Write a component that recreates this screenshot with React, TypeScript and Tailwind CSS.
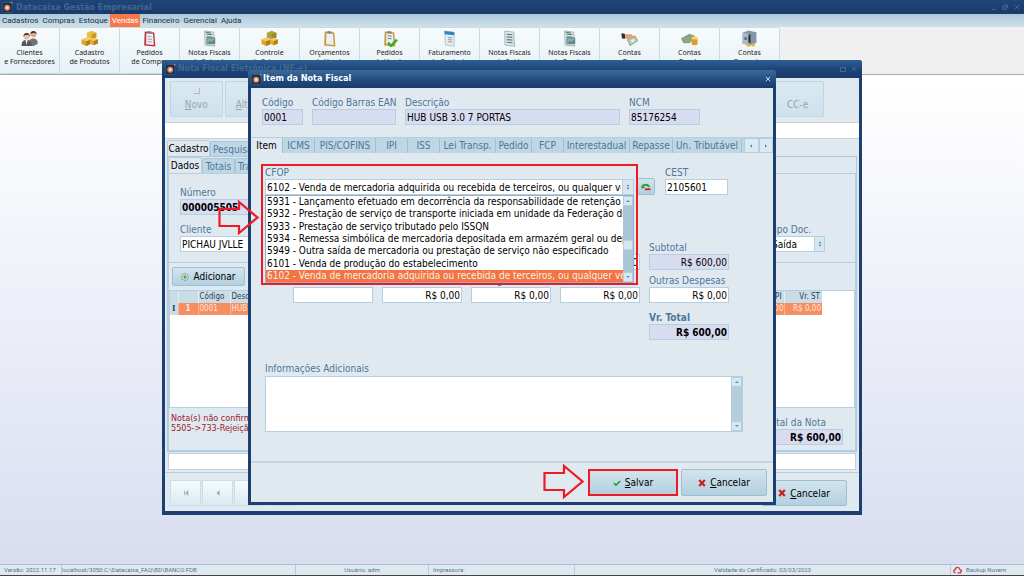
import React, { useState } from 'react'

const menus = ['Cadastros', 'Compras', 'Estoque', 'Vendas', 'Financeiro', 'Gerencial', 'Ajuda']

const shortcuts = [
  { icon: 'people', lines: ['Clientes', 'e Fornecedores'] },
  { icon: 'boxes', lines: ['Cadastro', 'de Produtos'] },
  { icon: 'clipRed', lines: ['Pedidos', 'de Compra'] },
  { icon: 'invoiceIn', lines: ['Notas Fiscais', 'de Entrada'] },
  { icon: 'boxesGreen', lines: ['Controle', 'de Estoque'] },
  { icon: 'clip', lines: ['Orçamentos', 'de Venda'] },
  { icon: 'clipCheck', lines: ['Pedidos', 'de Venda'] },
  { icon: 'contract', lines: ['Faturamento', 'de Contrato'] },
  { icon: 'invoice', lines: ['Notas Fiscais', 'de Saída'] },
  { icon: 'invoiceIn', lines: ['Notas Fiscais', 'de Serviço'] },
  { icon: 'hand', lines: ['Contas', 'a Pagar'] },
  { icon: 'coins', lines: ['Contas', 'a Receber'] },
  { icon: 'safe', lines: ['Contas', 'Correntes'] }
]

const noteActions = [
  'Novo', 'Alterar', 'Excluir', 'Imprimir', 'Enviar', 'Consultar',
  'Duplicar', 'Inutilizar', 'E-mail', 'XML', 'DANFE', 'CC-e'
]

const itemTabs = [
  { name: 'Item', width: 'w-8' },
  { name: 'ICMS', width: 'w-8' },
  { name: 'PIS/COFINS', width: 'w-[61px]' },
  { name: 'IPI', width: 'w-8' },
  { name: 'ISS', width: 'w-8' },
  { name: 'Lei Transp.', width: 'w-14' },
  { name: 'Pedido', width: 'w-9' },
  { name: 'FCP', width: 'w-8' },
  { name: 'Interestadual', width: 'w-[66px]' },
  { name: 'Repasse', width: 'w-[43px]' },
  { name: 'Un. Tributável', width: 'w-[69px]' }
]

const cfops = [
  '5931 - Lançamento efetuado em decorrência da responsabilidade de retenção do',
  '5932 - Prestação de serviço de transporte iniciada em unidade da Federação diversa',
  '5933 - Prestação de serviço tributado pelo ISSQN',
  '5934 - Remessa simbólica de mercadoria depositada em armazém geral ou depósito',
  '5949 - Outra saída de mercadoria ou prestação de serviço não especificado',
  '6101 - Venda de produção do estabelecimento',
  '6102 - Venda de mercadoria adquirida ou recebida de terceiros, ou qualquer venda'
]

function AppLogo() {
  return (
    <svg className="h-3 w-3 shrink-0" viewBox="0 0 12 12">
      <rect x="0.5" y="1.5" width="9.5" height="10" rx="1" fill="#16304f" stroke="#3c6a8e" strokeWidth="0.6" />
      <circle cx="5.2" cy="6.7" r="2.2" fill="#fbe3d4" stroke="#f0814b" strokeWidth="1.5" />
      <circle cx="9.6" cy="1.6" r="0.9" fill="#f0814b" />
    </svg>
  )
}

function ClipboardArt({ frame, paper }: { frame: string; paper: string }) {
  return (
    <g>
      <path d="M3.5 1.5 L12.5 2.3 L13.5 15.5 L3 14.6 Z" fill={frame} />
      <path d="M5 3 L11.3 3.5 L12 14 L4.8 13.3 Z" fill={paper} />
      <path d="M6 1 L10 1.3 L10 3.4 L6 3.1 Z" fill="#777f88" />
    </g>
  )
}

function BoxesArt({ top }: { top: string }) {
  return (
    <g strokeLinejoin="round">
      <path d="M5.5 2.5 L10 0.8 L14.5 2.5 L14.5 7 L10 8.8 L5.5 7 Z" fill={top} />
      <path d="M10 4.2 L14.5 2.5 V7 L10 8.8 Z" fill="#8a6a14" opacity="0.45" />
      <path d="M0.5 9 L5 7.3 L9 9 V13.2 L4.8 15 L0.5 13.2 Z" fill="#dca32a" />
      <path d="M4.8 10.7 L9 9 V13.2 L4.8 15 Z" fill="#b67d16" />
      <path d="M8.5 8.8 L12 7.3 L15.8 8.8 V12.7 L12 14.4 L8.5 13 Z" fill="#e2ad33" />
      <path d="M12 10.4 L15.8 8.8 V12.7 L12 14.4 Z" fill="#b67d16" />
      <path d="M0.5 9 L5 7.3 L9 9 L4.8 10.7 Z" fill="#f2cd62" />
      <path d="M8.5 8.8 L12 7.3 L15.8 8.8 L12 10.4 Z" fill="#f2cd62" />
    </g>
  )
}

function InvoiceArt() {
  return (
    <g>
      <path d="M3.5 1 L12 2 L12.8 15.2 L3.8 14.2 Z" fill="#dbe7ea" stroke="#8fa5ad" strokeWidth="0.7" />
      <path d="M5.3 4 L10.5 4.5 M5.4 6.5 L10.7 7 M5.5 9 L10.8 9.5 M5.5 11.5 L10.9 12" stroke="#567d78" strokeWidth="1.1" />
    </g>
  )
}

function ShortcutIcon({ name }: { name: string }) {
  return (
    <svg className="h-[17px] w-[17px]" viewBox="0 0 16 16">
      {name === 'people' && (
        <g>
          <path d="M7 15 C7 10 8.5 8 11.5 8 C14.5 8 15.8 10 15.8 13 L12 15 Z" fill="#6f7478" />
          <circle cx="11.7" cy="4" r="2.8" fill="#e2a882" />
          <path d="M8.8 4 C8.6 0 14.6 -0.4 14.6 4 L13 2.6 L10 3 Z" fill="#34302f" />
          <path d="M0.5 15 C0.5 11 2 9.3 5.2 9.3 C8.5 9.3 10 11 10 15 Z" fill="#55595e" />
          <path d="M4.2 9.3 L5.2 14 L6.3 9.3 Z" fill="#f4f4f4" />
          <circle cx="5.3" cy="6" r="2.9" fill="#efbd98" />
          <path d="M2.3 6 C2 1.8 8.5 1.5 8.3 6 L7 4.4 L3.8 4.6 Z" fill="#34302f" />
        </g>
      )}
      {name === 'boxes' && <BoxesArt top="#ecbd45" />}
      {name === 'boxesGreen' && <BoxesArt top="#a9a53a" />}
      {name === 'clipRed' && (
        <g>
          <ClipboardArt frame="#c8323c" paper="#eef0f4" />
          <path d="M6.3 6 L10 6.3 M6.3 8.5 L10.3 8.8 M6.3 11 L10.3 11.3" stroke="#9aa6b4" strokeWidth="0.9" />
        </g>
      )}
      {name === 'clip' && <ClipboardArt frame="#c99638" paper="#e9eff6" />}
      {name === 'clipCheck' && (
        <g>
          <ClipboardArt frame="#c99638" paper="#e9eff6" />
          <path d="M6.3 5.5 L10 5.8 M6.3 8 L10 8.3" stroke="#6d7a88" strokeWidth="1" />
          <path d="M6.5 12 L9.5 15 L15 9" fill="none" stroke="#3bae26" strokeWidth="2.4" />
        </g>
      )}
      {name === 'contract' && (
        <g>
          <path d="M3.5 1 L12.3 2 L12.3 15.2 L4.2 14 Z" fill="#e9edf1" stroke="#9eabb8" strokeWidth="0.6" />
          <path d="M3.3 1 L12.5 2 V5 L3.4 4 Z" fill="#2389cf" />
          <path d="M6.5 7 L10.5 7.4 M6.5 9 L10.5 9.4 M6.5 11 L10.5 11.4" stroke="#8995a3" strokeWidth="0.9" />
        </g>
      )}
      {name === 'invoice' && <InvoiceArt />}
      {name === 'invoiceIn' && (
        <g>
          <InvoiceArt />
          <path d="M5.5 7.5 H13 V13 H5.5 Z" fill="#93a9c4" stroke="#50667f" strokeWidth="0.6" />
          <path d="M5.8 12.8 L8.5 10 L10 11.3 L12 9 L12.8 12.8 Z" fill="#4f9a54" />
          <path d="M4.5 2.3 L9.5 2.9" stroke="#4f9a54" strokeWidth="1.2" />
        </g>
      )}
      {name === 'hand' && (
        <g>
          <path d="M6 9 L13 5.5 L15.8 10 L8.5 14.8 Z" fill="#b9cdb4" stroke="#73906f" strokeWidth="0.7" />
          <circle cx="11" cy="10" r="1.7" fill="#e6efe3" />
          <path d="M3 4 L10 4 L12.5 8 L9.5 9 L3.5 8 Z" fill="#dfa27b" />
          <path d="M0.3 3 L3.6 3.6 L3.8 8.2 L1 8 Z" fill="#2c2f38" />
        </g>
      )}
      {name === 'coins' && (
        <g>
          <path d="M0.5 8 L8 4 L13 6 L8 12 L2.5 12 Z" fill="#8ea58a" stroke="#60785d" strokeWidth="0.6" />
          <path d="M10 7.5 H15.5 V13.5 C15.5 15 10 15 10 13.5 Z" fill="#e5b22c" />
          <ellipse cx="12.7" cy="7.5" rx="2.8" ry="1.3" fill="#f6d660" />
          <path d="M10 10 Q12.7 11.5 15.5 10 M10 12 Q12.7 13.5 15.5 12" fill="none" stroke="#a97c14" strokeWidth="0.6" />
        </g>
      )}
      {name === 'safe' && (
        <g>
          <path d="M1.5 2.5 L7 0.5 L14.5 2 V12 L9 14.5 L1.5 13 Z" fill="#8396a5" />
          <path d="M1.5 2.5 L9 4 V14.5 L1.5 13 Z" fill="#a9bac6" />
          <path d="M7 4.5 L9 4 V13 L7 12 Z" fill="#27303a" />
          <circle cx="4.4" cy="8" r="1.5" fill="#61727f" />
          <circle cx="7" cy="14" r="1.8" fill="#e5b22c" />
          <circle cx="11.5" cy="14" r="1.6" fill="#e5b22c" />
        </g>
      )}
    </svg>
  )
}

function RedArrow({ className }: { className: string }) {
  return (
    <svg className={`pointer-events-none absolute h-[35px] w-[41px] ${className}`} viewBox="0 0 41 35" fill="none">
      <path d="M1.5 9 H21 V2 L39.5 17.5 L21 33 V26 H1.5 Z" stroke="#ed1c24" strokeWidth="2.2" />
    </svg>
  )
}

interface FieldProps {
  id: string
  label: string
  value?: string
  className?: string
  readOnly?: boolean
  bold?: boolean
  boldLabel?: boolean
  right?: boolean
}

function Field({ id, label, value = '', className = '', readOnly, bold, boldLabel, right }: FieldProps) {
  return (
    <div className={`flex flex-col ${className}`}>
      <label
        htmlFor={id}
        className={`h-[13px] leading-[13px] whitespace-nowrap text-[#4d7699] ${boldLabel ? 'font-bold' : ''}`}
      >
        {label}
      </label>
      <input
        id={id}
        type="text"
        defaultValue={value}
        readOnly={readOnly}
        className={`h-4 w-full border border-[#b5cfe0] px-px text-black outline-none ${
          readOnly ? 'bg-[#d8dcf0]' : 'bg-white'
        } ${bold ? 'font-bold' : ''} ${right ? 'text-right' : ''}`}
      />
    </div>
  )
}

function UpDown() {
  return (
    <svg className="h-2 w-1" viewBox="0 0 4 8" fill="#3f6f98">
      <path d="M2 1.5 L3.3 3.2 H0.7 Z M2 6.5 L3.3 4.8 H0.7 Z" />
    </svg>
  )
}

function ScrollArrow({ down }: { down?: boolean }) {
  return (
    <span className="flex h-[10px] w-full shrink-0 items-center justify-center border border-[#b5cfe0] bg-[#d6e7f0]">
      <svg className="h-1 w-1" viewBox="0 0 4 4" fill="#6b94b3">
        {down ? <path d="M0 1 H4 L2 3 Z" /> : <path d="M0 3 H4 L2 1 Z" />}
      </svg>
    </span>
  )
}

function RedX() {
  return (
    <svg className="h-2 w-2" viewBox="0 0 8 8">
      <path d="M1.2 1 L6.8 7 M6.8 1 L1.2 7" stroke="#c8231b" strokeWidth="2.2" />
    </svg>
  )
}

function CloseGlyph() {
  return (
    <svg className="h-[6px] w-[6px]" viewBox="0 0 6 6">
      <path d="M0.8 0.8 L5.2 5.2 M5.2 0.8 L0.8 5.2" stroke="currentColor" strokeWidth="1" />
    </svg>
  )
}

const buttonClass = 'flex items-center justify-center gap-1 bg-linear-to-b from-[#d2e4ee] to-[#b3d0df] text-black'
const buttonBorder = 'rounded-[2px] border border-[#9dbfd3]'

function NoteWindow() {
  return (
    <section className="absolute inset-x-0 top-[60px] mx-auto flex w-[700px] flex-col rounded-t-[3px] border-x-[3px] border-b-[4px] border-[#1c4071] bg-[#e1e9f0]">
      <header className="-mx-[3px] flex h-[18px] items-center gap-px rounded-t-[3px] bg-linear-to-b from-[#2f6093] via-[#1e4478] to-[#1a3a6b] px-[3px] text-[#3f6793]">
        <AppLogo />
        <h2 className="flex-1 font-['DejaVu_Sans'] text-[8px] font-bold">Nota Fiscal Eletrônica (NF-e)</h2>
        <button aria-label="Maximizar" className="mr-1 h-[5px] w-[6px] border border-current" />
        <button aria-label="Fechar" className="pr-0.5">
          <CloseGlyph />
        </button>
      </header>

      <div className="flex gap-0.5 pt-[3px] pr-[35px] pb-[5px] pl-[5px]">
        {noteActions.map(action => (
          <button
            key={action}
            disabled
            className="flex h-9 flex-1 flex-col items-center justify-end overflow-hidden rounded-[2px] border border-[#bdd7e4] bg-linear-to-b from-[#dbe9f0] to-[#cde2ec] pb-1 text-[#9ca4aa]"
          >
            {action === 'Novo' && <span className="mb-1 ml-0.5 h-1.5 w-1.5 border-r border-b border-[#b2bbc0]" />}
            <span className="leading-[14px]">
              {action === 'CC-e' ? action : <><u>{action[0]}</u>{action.slice(1)}</>}
            </span>
          </button>
        ))}
      </div>
      <div className="h-[17px] border-y border-[#c9cfd4] bg-white" />

      <div className="mx-0.5">
        <div className="flex h-[17px] items-end">
          <button className="h-4 w-[43px] rounded-t-[2px] border border-b-0 border-[#b5cfe0] bg-[#e1e9f0] text-black">Cadastro</button>
          <button className="h-[15px] rounded-t-[2px] border border-b-0 border-[#a9c6d8] bg-[#bfd6e4] px-0.5 text-[#4d7699]">Pesquisa</button>
        </div>
        <div className="border border-[#aec9db]">
          <div className="flex h-4 items-end">
            <button className="h-4 w-[34px] rounded-t-[2px] border border-b-0 border-[#b5cfe0] bg-[#e1e9f0] text-black">Dados</button>
            <button className="h-[15px] w-[33px] rounded-t-[2px] border border-b-0 border-[#a9c6d8] bg-[#bfd6e4] text-[#4d7699]">Totais</button>
            <button className="h-[15px] rounded-t-[2px] border border-b-0 border-[#a9c6d8] bg-[#bfd6e4] px-0.5 text-[#4d7699]">Transporte</button>
          </div>
          <div className="flex h-[278px] flex-col border border-[#b5cfe0]">
            <div className="flex flex-col gap-2 px-[11px] pt-3">
              <Field id="numero" label="Número" value="000005505" className="w-24" readOnly bold />
              <div className="flex justify-between pr-[19px]">
                <Field id="cliente" label="Cliente" value="PICHAU JVLLE" className="w-72" />
                <div className="flex w-14 flex-col">
                  <label htmlFor="tipo" className="h-[13px] leading-[13px] text-[#4d7699]">Tipo Doc.</label>
                  <div className="relative">
                    <select id="tipo" className="h-4 w-full appearance-none border border-[#b5cfe0] bg-white px-0.5 text-black outline-none">
                      <option>Saída</option>
                      <option>Entrada</option>
                    </select>
                    <span className="pointer-events-none absolute top-0 right-0 flex h-4 w-[11px] items-center justify-center border border-[#b5cfe0] bg-[#d6e7f0]">
                      <UpDown />
                    </span>
                  </div>
                </div>
              </div>
            </div>

            <div className="mt-[10px] border-t border-[#b5cfe0] px-[3px] pt-1">
              <button className={`${buttonClass} ${buttonBorder} h-[19px] w-[73px]`}>
                <svg className="h-2 w-2" viewBox="0 0 8 8">
                  <circle cx="4" cy="4" r="3.4" fill="#dfeadf" stroke="#6f9a70" strokeWidth="0.8" />
                  <path d="M4 2 V6 M2 4 H6" stroke="#469044" strokeWidth="1.2" />
                </svg>
                Adicionar
              </button>
            </div>

            <div className="mt-1 h-[118px] border border-[#b5cfe0] bg-white pr-8">
              <table className="w-full table-fixed border-collapse text-[8px] leading-3">
                <thead>
                  <tr className="h-3 bg-[#c9dde8] text-left text-[#33414d]">
                    <th className="w-2 font-normal" />
                    <th className="w-5 border-l border-[#e1edf3] font-normal" />
                    <th className="w-8 border-l border-[#e1edf3] pl-px font-normal">Código</th>
                    <th className="border-l border-[#e1edf3] pl-px font-normal">Descrição</th>
                    <th className="w-12 border-l border-[#e1edf3] pr-0.5 text-right font-normal">Vr. IPI</th>
                    <th className="w-[38px] border-l border-[#e1edf3] pr-0.5 text-right font-normal">Vr. ST</th>
                  </tr>
                </thead>
                <tbody>
                  <tr className="h-3 bg-[#f78e63] text-[#fde6dc]">
                    <td className="bg-[#c9dde8] text-center font-['Liberation_Serif'] font-bold text-[#234]">I</td>
                    <td className="border-l border-[#fbb394] text-center font-bold">1</td>
                    <td className="border-l border-[#fbb394] pl-px">0001</td>
                    <td className="border-l border-[#fbb394] pl-px">HUB USB 3.0 7 PORTAS</td>
                    <td className="border-l border-[#fbb394] text-right">R$ 0,00</td>
                    <td className="border-l border-[#fbb394] pr-px text-right">R$ 0,00</td>
                  </tr>
                </tbody>
              </table>
            </div>

            <div className="flex justify-between pr-3 pl-0.5">
              <p className="mt-[5px] text-[9px] leading-[10px] text-[#98222c]">
                Nota(s) não confirmada(s)
                <br />
                5505-&gt;733-Rejeição
              </p>
              <Field id="totalNota" label="Total da Nota" value="R$ 600,00" className="mt-2 w-[76px]" readOnly bold right />
            </div>
          </div>
        </div>
      </div>

      <div className="mx-[3px] mt-px h-[17px] border border-[#c9cfd4] bg-white" />
      <footer className="mt-0.5 flex items-start justify-between border-t border-[#b5cfe0] pt-[7px] pr-3 pb-[5px] pl-[5px]">
        <div className="flex gap-px">
          {['M2 1 V7 M6.5 1 L3.5 4 L6.5 7 Z', 'M5.5 1 L2.5 4 L5.5 7 Z', 'M2.5 1 L5.5 4 L2.5 7 Z', 'M6 1 V7 M1.5 1 L4.5 4 L1.5 7 Z'].map((d, i) => (
            <button
              key={d}
              aria-label={['Primeiro', 'Anterior', 'Próximo', 'Último'][i]}
              className="flex h-[26px] w-[31px] items-center justify-center rounded-[1px] border border-[#c8dfea] bg-linear-to-b from-[#f6fafc] to-[#dbebf3]"
            >
              <svg className="h-[6px] w-[6px]" viewBox="0 0 8 8">
                <path d={d} fill="#8fa9be" stroke="#8fa9be" strokeWidth="1" />
              </svg>
            </button>
          ))}
        </div>
        <button className={`${buttonClass} ${buttonBorder} h-[26px] w-[86px]`}>
          <RedX />
          <span><u>C</u>ancelar</span>
        </button>
      </footer>
    </section>
  )
}

function ItemWindow() {
  const [tab, setTab] = useState('Item')
  const [cfop, setCfop] = useState(cfops[6])

  return (
    <section className="absolute inset-x-0 top-[70px] mx-auto flex w-[528px] flex-col rounded-t-[3px] border-x-[3px] border-b-[3px] border-[#1c4071] bg-[#e1e9f0]">
      <header className="-mx-[3px] flex h-[18px] items-center rounded-t-[3px] bg-linear-to-b from-[#3b6b9a] via-[#234f83] to-[#1a3a6b] px-[3px] text-white">
        <AppLogo />
        <h2 className="flex-1 font-['DejaVu_Sans_Condensed','DejaVu_Sans'] text-[9px] font-bold">Item da Nota Fiscal</h2>
        <button aria-label="Fechar" className="px-0.5 text-[#c8d8e6]">
          <CloseGlyph />
        </button>
      </header>

      <div className="flex gap-[9px] px-[11px] pt-2 pb-3">
        <Field id="codigo" label="Código" value="0001" className="w-[41px]" readOnly />
        <Field id="ean" label="Código Barras EAN" className="w-[84px]" readOnly />
        <Field id="descricao" label="Descrição" value="HUB USB 3.0 7 PORTAS" className="w-[215px]" readOnly />
        <Field id="ncm" label="NCM" value="85176254" className="w-[71px]" readOnly />
      </div>

      <div className="flex h-4 items-end border-t border-[#b5cfe0]" role="tablist">
        {itemTabs.map(t => (
          <button
            key={t.name}
            role="tab"
            aria-selected={tab === t.name}
            onClick={() => setTab(t.name)}
            className={`${t.width} h-[15px] rounded-t-[1px] border-r border-[#9fc0d4] whitespace-nowrap ${
              tab === t.name ? 'bg-[#e1e9f0] text-black' : 'bg-[#bfd6e4] text-[#4d7699]'
            }`}
          >
            {t.name}
          </button>
        ))}
        <div className="flex h-[15px] flex-1 bg-[#bfd6e4] pl-0.5">
          <button aria-label="Abas anteriores" className="flex flex-1 items-center justify-center border border-[#b5cfe0] bg-[#dbe9f1]">
            <svg className="h-1 w-1" viewBox="0 0 4 4" fill="#4a7aa0"><path d="M3 0.5 V3.5 L1 2 Z" /></svg>
          </button>
          <button aria-label="Próximas abas" className="flex flex-1 items-center justify-center border border-[#b5cfe0] bg-[#dbe9f1]">
            <svg className="h-1 w-1" viewBox="0 0 4 4" fill="#4a7aa0"><path d="M1 0.5 V3.5 L3 2 Z" /></svg>
          </button>
        </div>
      </div>

      <div className="flex h-[308px] flex-col px-[14px] pt-[13px]">
        <div className="flex items-end">
          <div className="relative flex w-[369px] flex-col">
            <label htmlFor="cfop" className="h-[13px] leading-[13px] text-[#4d7699]">CFOP</label>
            <select
              id="cfop"
              value={cfop}
              onChange={e => setCfop(e.target.value)}
              className="h-4 w-full appearance-none border border-[#b5cfe0] bg-white pr-3 pl-px text-black outline-none"
            >
              {cfops.map(c => (
                <option key={c} value={c}>{c}</option>
              ))}
            </select>
            <span className="pointer-events-none absolute right-0 bottom-0 flex h-4 w-3 items-center justify-center border border-[#b5cfe0] bg-[#d6e7f0]">
              <UpDown />
            </span>
            <div className="absolute top-full z-10 flex h-[88px] w-full border border-[#8fb0c8] bg-white">
              <ul role="listbox" aria-label="CFOP" className="grid min-w-0 flex-1 grid-rows-7">
                {cfops.map(c => (
                  <li
                    key={c}
                    role="option"
                    aria-selected={c === cfop}
                    onClick={() => setCfop(c)}
                    className={`flex items-center overflow-hidden pl-px leading-3 whitespace-nowrap ${
                      c === cfop ? 'bg-[#f07543] text-[#fdeee6]' : 'text-black'
                    }`}
                  >
                    {c}
                  </li>
                ))}
              </ul>
              <div className="flex w-[10px] flex-col justify-between bg-[#a9c5d7]">
                <ScrollArrow />
                <span className="mt-3 h-[10px] border border-[#b9d2e0] bg-[#d6e7f0]" />
                <ScrollArrow down />
              </div>
            </div>
            <div className="pointer-events-none absolute -inset-x-1 -top-0.5 z-20 h-[121px] border-2 border-[#ed1c24]" />
            <RedArrow className="top-[34px] -left-[47px] z-20" />
          </div>
          <button aria-label="Atualizar CFOP" className={`${buttonClass} ${buttonBorder} ml-0.5 h-[17px] w-[19px]`}>
            <svg className="h-[9px] w-[10px]" viewBox="0 0 10 9">
              <path d="M1.5 5 C2 2 7 2 8 5" fill="none" stroke="#2f9a3a" strokeWidth="1.8" />
              <path d="M0.3 3.5 L4.5 5.8 L0.6 6.7 Z" fill="#2f9a3a" />
              <path d="M4 7.3 H9.5" stroke="#c8231b" strokeWidth="1.8" />
            </svg>
          </button>
          <Field id="cest" label="CEST" value="2105601" className="ml-[10px] w-[63px]" />
        </div>

        <div className="mt-[46px] ml-7 grid grid-cols-[repeat(5,80px)] gap-x-[9px] gap-y-1">
          <Field id="unitario" label="Unit." value="R$ 600,00" className="col-start-4" right />
          <Field id="subtotal" label="Subtotal" value="R$ 600,00" readOnly right />
          <Field id="lote" label="Lote" />
          <Field id="desconto" label="Desconto" value="R$ 0,00" right />
          <Field id="seguro" label="Vr. Seguro" value="R$ 0,00" right />
          <Field id="frete" label="Frete" value="R$ 0,00" right />
          <Field id="despesas" label="Outras Despesas" value="R$ 0,00" right />
          <Field id="total" label="Vr. Total" value="R$ 600,00" className="col-start-5 mt-1" readOnly bold boldLabel right />
        </div>

        <label htmlFor="info" className="mt-[22px] h-[13px] leading-[13px] text-[#4d7699]">Informações Adicionais</label>
        <div className="mt-px flex h-14 w-[478px] border border-[#b5cfe0]">
          <textarea id="info" className="flex-1 resize-none bg-white p-0.5 outline-none" />
          <div className="flex w-[11px] flex-col justify-between bg-[#b3cddc]">
            <ScrollArrow />
            <ScrollArrow down />
          </div>
        </div>
      </div>

      <footer className="relative flex justify-end gap-[3px] border-t-2 border-[#c5d6e4] px-1.5 pt-1.5 pb-1.5">
        <RedArrow className="top-px left-[292px]" />
        <button className={`${buttonClass} h-[27px] w-[90px] border-2 border-[#ed1c24]`}>
          <svg className="h-2 w-2" viewBox="0 0 8 8">
            <path d="M0.8 4.2 L3 6.2 L7.2 2" fill="none" stroke="#2f9a3a" strokeWidth="1.7" />
          </svg>
          <span><u>S</u>alvar</span>
        </button>
        <button className={`${buttonClass} ${buttonBorder} h-[27px] w-[86px]`}>
          <RedX />
          <span><u>C</u>ancelar</span>
        </button>
      </footer>
    </section>
  )
}

export default function App() {
  return (
    <div className="relative flex min-h-screen flex-col overflow-hidden bg-linear-to-b from-white from-15% to-[#d8dcf0] font-['DejaVu_Sans_Condensed','DejaVu_Sans',sans-serif] text-[10px]">
      <header className="flex h-[14px] items-center gap-0.5 bg-linear-to-b from-[#1d4677] to-[#1a3a6b] px-0.5 text-[#3f6793]">
        <AppLogo />
        <h1 className="flex-1 font-['DejaVu_Sans'] text-[8px] leading-[13px] font-bold">Datacaixa Gestão Empresarial</h1>
        <button aria-label="Minimizar" className="mt-1 h-px w-1 bg-current" />
        <button aria-label="Restaurar" className="mx-1">
          <svg className="h-[6px] w-[6px]" viewBox="0 0 6 6" fill="none" stroke="currentColor" strokeWidth="1">
            <path d="M0.5 2.5 H4.2 V5.5 H0.5 Z M2 2 V0.8 H5.5 V3.8 H4.5" />
          </svg>
        </button>
        <button aria-label="Fechar" className="mr-0.5">
          <CloseGlyph />
        </button>
      </header>

      <nav className="flex h-[13px] items-center bg-linear-to-b from-[#adc8dc] to-[#cfe0ea] font-['Roboto',sans-serif] text-[8px] text-[#22303c]">
        {menus.map(menu => (
          <button key={menu} className={`h-[13px] px-0.5 leading-[13px] ${menu === 'Vendas' ? 'bg-[#f5794c] text-white' : ''}`}>
            {menu}
          </button>
        ))}
      </nav>

      <div className="flex h-12 border-b border-[#a5a9ad] bg-[#f0f0f0]">
        {shortcuts.map((s, i) => (
          <button
            key={i}
            className="flex w-[60px] flex-col items-center rounded-[2px] border border-l-0 border-[#c5dde9] bg-linear-to-b from-[#f8fbfc] to-[#e6f1f6] pt-0.5 font-['Noto_Sans',sans-serif] text-[7px] leading-[9px] text-[#1c1c1c]"
          >
            <ShortcutIcon name={s.icon} />
            <span className="mt-px whitespace-nowrap">{s.lines[0]}</span>
            <span className="whitespace-nowrap">{s.lines[1]}</span>
          </button>
        ))}
      </div>

      <main className="flex-1">
        <NoteWindow />
        <ItemWindow />
      </main>

      <footer className="flex h-3 items-center border-t border-b border-t-[#a9c0d3] border-b-[#444] bg-[#e1e9f0] font-['Roboto',sans-serif] text-[6px] leading-[10px] text-[#4d7699]">
        <span className="w-[62px] border-r border-[#b5cfe0] pl-1">Versão: 2022.11.17</span>
        <span className="w-[234px] border-r border-[#b5cfe0]">localhost/3050:C:\Datacaixa_FAQ\BD\BANCO.FDB</span>
        <span className="w-[133px] border-r border-[#b5cfe0] text-center">Usuário: adm</span>
        <span className="w-[146px] border-r border-[#b5cfe0] pl-1">Impressora:</span>
        <span className="flex-1 text-center">Validade do Certificado: 03/03/2023</span>
        <span className="flex w-[74px] items-center gap-1 border-l border-[#b5cfe0] pl-0.5">
          <svg className="h-2 w-[9px]" viewBox="0 0 9 8" fill="none" stroke="#d8343b" strokeWidth="1.3">
            <path d="M2.5 6.8 C0 6.5 0.5 3.5 2.3 3.6 C2.5 0.8 6.5 0.8 6.7 3.4 C8.5 3.5 8.6 5 8 5.6 M4.5 6.8 H8 M8 6.8 V4.6" />
          </svg>
          Backup Nuvem
        </span>
      </footer>
    </div>
  )
}
